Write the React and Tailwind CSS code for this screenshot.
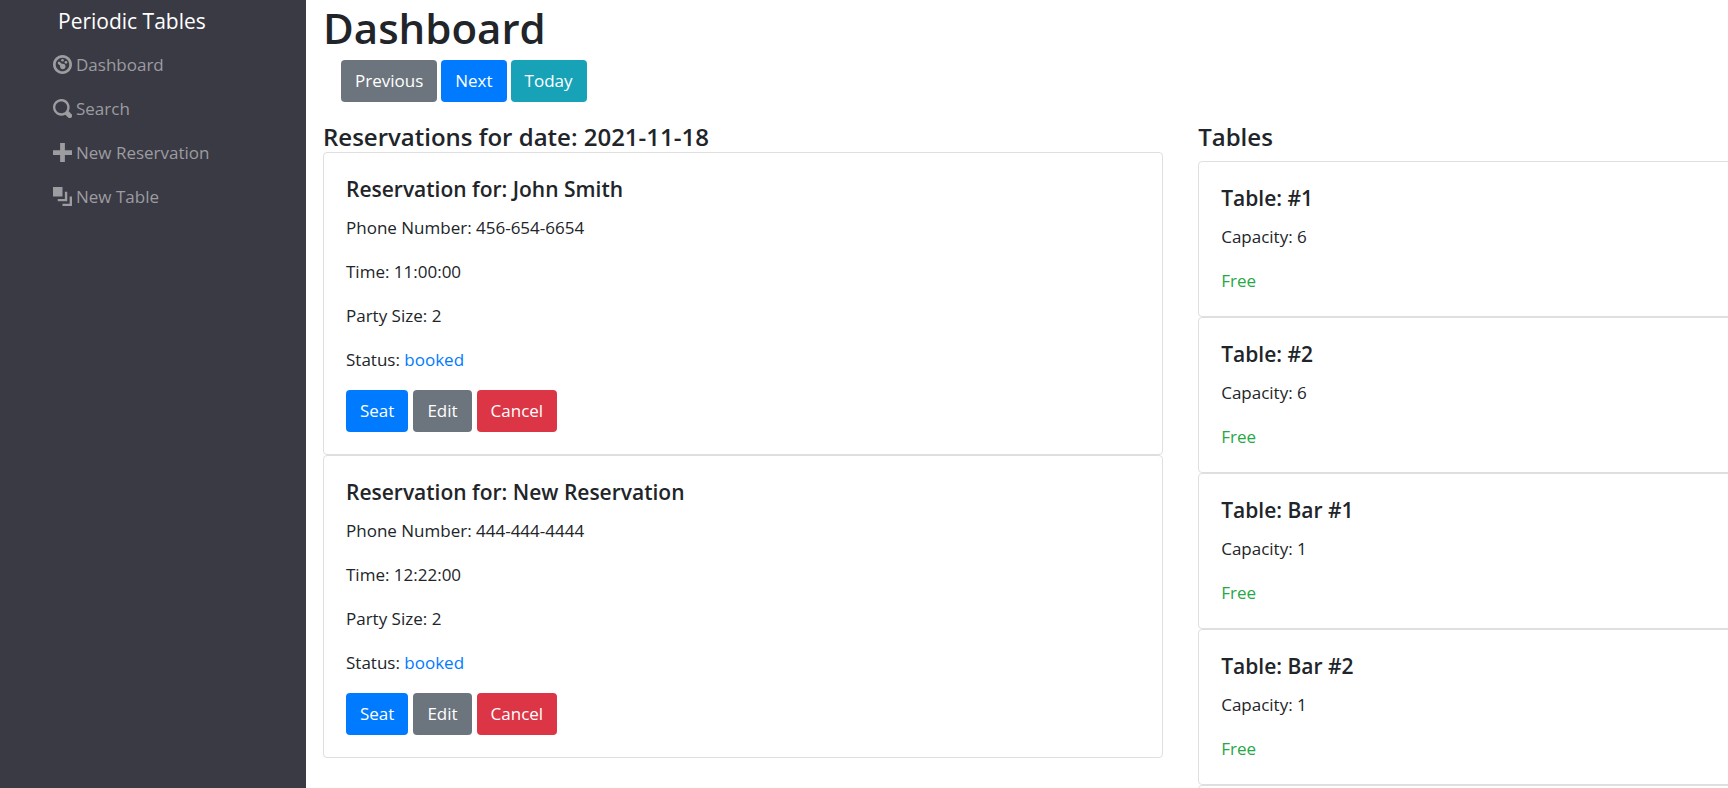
const ICONS = {
  dashboard: (
    <>
      <path
        d="M4 0c-2.200 0-4 1.800-4 4s1.800 4 4 4 4-1.800 4-4-1.800-4-4-4zm0 1.150c1.570 0 2.850 1.280 2.850 2.850s-1.280 2.850-2.850 2.850-2.850-1.280-2.850-2.850 1.280-2.850 2.850-2.850z"
      />
      <circle cx="4" cy="2.200" r="0.550" />
      <circle cx="5.450" cy="3.100" r="0.550" />
      <path d="M2.100 3a.550.550 0 0 1 .780-.100l.950.850c.100-.020.200-.020.300-.020.700 0 1.150.520 1.150 1.150s-.520 1.150-1.150 1.150-1.150-.520-1.150-1.150c0-.120.020-.220.050-.320l-.850-.800a.550.550 0 0 1-.080-.760z" />
    </>
  ),
  search: (
    <path d="M3.500 0c-1.930 0-3.500 1.570-3.500 3.500s1.570 3.500 3.500 3.500c.590 0 1.170-.140 1.660-.410a1 1 0 0 0 .130.130l1 1a1.020 1.020 0 1 0 1.440-1.440l-1-1a1 1 0 0 0-.160-.130c.270-.490.440-1.060.440-1.660 0-1.930-1.550-3.500-3.500-3.500zm0 1c1.390 0 2.500 1.100 2.500 2.500 0 .660-.240 1.270-.660 1.720-.010.010-.020.020-.030.030a1 1 0 0 0-.130.130c-.440.400-1.040.630-1.690.630-1.390 0-2.500-1.100-2.500-2.500s1.100-2.500 2.500-2.500z" />
  ),
  plus: <path d="M3 0v3h-3v2h3v3h2v-3h3v-2h-3v-3h-2z" />,
  layers: <path d="M0 0v4h4v-4h-4zm5 2v3h-3v1h4v-4h-1zm2 2v3h-3v1h4v-4h-1z" />,
};

const NAV = [
  { label: "Dashboard", icon: "dashboard" },
  { label: "Search", icon: "search" },
  { label: "New Reservation", icon: "plus" },
  { label: "New Table", icon: "layers" },
];

const RESERVATIONS = [
  { name: "John Smith", phone: "456-654-6654", time: "11:00:00", size: 2, status: "booked" },
  { name: "New Reservation", phone: "444-444-4444", time: "12:22:00", size: 2, status: "booked" },
];

const TABLES = [
  { name: "#1", capacity: 6 },
  { name: "#2", capacity: 6 },
  { name: "Bar #1", capacity: 1 },
  { name: "Bar #2", capacity: 1 },
];

const COLORS = {
  primary: "bg-[#007bff]",
  secondary: "bg-[#6c757d]",
  info: "bg-[#17a2b8]",
  danger: "bg-[#dc3545]",
};

function Button({ color, children }) {
  return (
    <button type="button" className={`h-[42px] rounded px-3.5 text-white ${COLORS[color]}`}>
      {children}
    </button>
  );
}

function Card({ title, children }) {
  return (
    <article className="rounded border border-[#dfdfdf] px-[22px] pt-[22px]">
      {title && <h5 className="mb-3 text-[21px] leading-7 font-semibold">{title}</h5>}
      {children}
    </article>
  );
}

export default function App() {
  return (
    <div className="flex h-screen overflow-hidden bg-white font-['Open_Sans',sans-serif] text-[17px] leading-[26px] text-[#212529]">
      <nav className="w-[306px] shrink-0 bg-[#3a3a44]">
        <a href="#" className="block pt-1 pl-[58px] text-[21px] leading-[34px] text-white">
          Periodic Tables
        </a>
        <ul className="pt-[5px]">
          {NAV.map(({ label, icon }) => (
            <li key={label}>
              <a href="#" className="flex h-11 items-center gap-1 pl-[53px] text-[#9c9ca1]">
                <svg viewBox="0 0 8 8" className="mb-0.5 size-[19px] fill-current" aria-hidden="true">
                  {ICONS[icon]}
                </svg>
                {label}
              </a>
            </li>
          ))}
        </ul>
      </nav>

      <main className="min-w-0 flex-1 pl-[17px]">
        <h1 className="mb-[5px] text-[42px] leading-[55px] font-semibold">Dashboard</h1>
        <div className="flex gap-1 pl-[18px]">
          <Button color="secondary">Previous</Button>
          <Button color="primary">Next</Button>
          <Button color="info">Today</Button>
        </div>
        <div className="mt-5 flex gap-[35px]">
          <section className="w-[59.8%] shrink-0">
            <h4 className="text-[24px] leading-[30px] font-semibold">Reservations for date: 2021-11-18</h4>
            {RESERVATIONS.map((r) => (
              <Card key={r.name} title={`Reservation for: ${r.name}`}>
                <p className="mb-[18px]">Phone Number: {r.phone}</p>
                <p className="mb-[18px]">Time: {r.time}</p>
                <p className="mb-[18px]">Party Size: {r.size}</p>
                <p className="mb-[17px]">
                  Status: <span className="text-[#007bff]">{r.status}</span>
                </p>
                <div className="flex gap-[5px] pb-[22px]">
                  <Button color="primary">Seat</Button>
                  <Button color="secondary">Edit</Button>
                  <Button color="danger">Cancel</Button>
                </div>
              </Card>
            ))}
          </section>
          <section className="-mr-2 min-w-0 flex-1">
            <h4 className="mb-[9px] text-[24px] leading-[30px] font-semibold">Tables</h4>
            {TABLES.map((t) => (
              <Card key={t.name} title={`Table: ${t.name}`}>
                <p className="mb-[18px]">Capacity: {t.capacity}</p>
                <p className="pb-[22px] text-[#28a745]">Free</p>
              </Card>
            ))}
            <Card />
          </section>
        </div>
      </main>
    </div>
  );
}
